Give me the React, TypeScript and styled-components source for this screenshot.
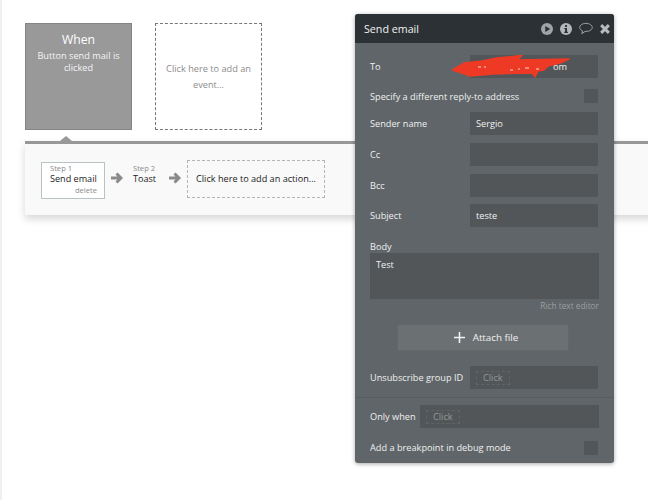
import React from "react";
import styled, { createGlobalStyle } from "styled-components";

const Global = createGlobalStyle`
  html, body { margin: 0; padding: 0; background: #fff; }
  body { font-family: "Open Sans", "Liberation Sans", sans-serif; }
  * { box-sizing: border-box; }
`;

const Page = styled.div`
  position: relative;
  width: 648px;
  height: 500px;
  overflow: hidden;
  background: #fff;
  border-left: 2px solid #f0f0f0;
  padding: 23px 0 0 23px;
`;

const Events = styled.div`
  display: flex;
  gap: 23px;
`;

const WhenCard = styled.div`
  width: 107px;
  height: 107px;
  background: #999;
  border: 1px solid #848484;
  color: #fff;
  text-align: center;
  padding: 6px 8px 0;
`;

const WhenTitle = styled.div`
  font-size: 12.2px;
  line-height: 20px;
`;

const WhenText = styled.div`
  font-size: 9.2px;
  line-height: 12px;
  color: #f4f4f4;
`;

const AddEvent = styled.div`
  width: 107px;
  height: 107px;
  border: 1px dashed #777;
  color: #8d8d8d;
  font-size: 9.2px;
  line-height: 15.5px;
  text-align: center;
  padding: 37px 6px 0;
`;

const Bar = styled.div`
  position: relative;
  margin-top: 11px;
  width: 640px;
  height: 74px;
  background: #f9f9f9;
  border-top: 3px solid #989898;
  box-shadow: 0 4px 8px rgba(0, 0, 0, 0.16);
  display: flex;
  align-items: flex-start;
  padding: 16px 0 0 16px;
  &::before {
    content: "";
    position: absolute;
    left: 35px;
    top: -8px;
    border-left: 6px solid transparent;
    border-right: 6px solid transparent;
    border-bottom: 5px solid #989898;
  }
`;

const Step = styled.div<{ $active?: boolean }>`
  width: ${(p) => (p.$active ? "64px" : "38px")};
  height: 37px;
  margin-top: 2px;
  border: 1px solid ${(p) => (p.$active ? "#b9c3c6" : "transparent")};
  background: ${(p) => (p.$active ? "#fff" : "transparent")};
  padding: 0 7px 0 8px;
  display: flex;
  flex-direction: column;
`;

const StepLabel = styled.span`
  font-size: 7.6px;
  line-height: 10px;
  color: #8a8a8a;
  white-space: nowrap;
`;

const StepName = styled.span`
  font-size: 9.1px;
  line-height: 12px;
  color: #222;
  white-space: nowrap;
`;

const StepDelete = styled.span`
  font-size: 7.6px;
  line-height: 11px;
  text-align: right;
  color: #8a8a8a;
`;

const ArrowSlot = styled.div<{ $wide?: boolean }>`
  width: ${(p) => (p.$wide ? "25px" : "19px")};
  height: 38px;
  display: flex;
  align-items: center;
  justify-content: center;
  padding-left: ${(p) => (p.$wide ? "0" : "4px")};
  padding-bottom: 3px;
`;

const AddAction = styled.div`
  width: 138px;
  height: 38px;
  border: 1px dashed #aeb6b6;
  font-size: 9.15px;
  line-height: 35px;
  text-align: center;
  color: #222;
  white-space: nowrap;
`;

const Panel = styled.div`
  position: absolute;
  left: 353px;
  top: 14px;
  width: 259px;
  height: 449px;
  background: #5f6568;
  border-radius: 3px;
  box-shadow: 0 1px 4px rgba(0, 0, 0, 0.35);
  color: #f0f0f0;
  font-size: 9.2px;
`;

const Header = styled.div`
  height: 29px;
  background: #2c3135;
  border-radius: 3px 3px 0 0;
  display: flex;
  align-items: center;
  padding: 0 4px 0 9px;
  font-size: 10.7px;
  color: #f1f1f1;
`;

const HeaderTitle = styled.span`
  flex: 1;
`;

const HeaderIcons = styled.div`
  display: flex;
  align-items: center;
  gap: 7px;
`;

const Body = styled.div`
  padding: 12px 16px 0 15px;
  display: flex;
  flex-direction: column;
`;

const Row = styled.div<{ $top?: number }>`
  display: flex;
  align-items: center;
  justify-content: space-between;
  height: 23px;
  margin-top: ${(p) => p.$top ?? 0}px;
  white-space: nowrap;
`;

const Field = styled.div<{ $wide?: boolean }>`
  width: ${(p) => (p.$wide ? 179 : 128)}px;
  margin-right: ${(p) => (p.$wide ? -1 : 0)}px;
  flex-shrink: 0;
  height: 23px;
  background: #525659;
  color: #f1f1f1;
  line-height: 23px;
  padding-left: 6px;
  font-size: 9.2px;
  display: flex;
  align-items: center;
`;

const MaskedAddress = styled.span`
  margin-left: 77px;
`;

const Check = styled.div`
  width: 14px;
  height: 14px;
  background: #525659;
`;

const BodyLabel = styled.div`
  margin-top: 13px;
  line-height: 13px;
`;

const TextArea = styled.div`
  width: 229px;
  height: 46px;
  background: #525659;
  padding: 5px 6px;
  line-height: 14px;
`;

const RichLink = styled.div`
  width: 229px;
  text-align: right;
  font-size: 8.3px;
  line-height: 14px;
  color: #9ba0a2;
`;

const AttachButton = styled.div`
  width: 172px;
  height: 27px;
  margin: 11px 0 0 27px;
  padding-left: 6px;
  background: #6b7073;
  border: 1px solid #62676a;
  display: flex;
  align-items: center;
  justify-content: center;
  gap: 8px;
  color: #f1f1f1;
  font-size: 9.8px;
`;

const ClickChip = styled.span`
  border: 1px dashed #5f6467;
  color: #93989a;
  font-size: 9.2px;
  line-height: 12px;
  padding: 0 6px;
  height: 14px;
`;

const Divider = styled.div`
  height: 1px;
  background: #575c5f;
  margin: 8px -16px 7px -15px;
`;

const Scribble = styled.svg`
  position: absolute;
  left: 97px;
  top: 41px;
`;

const Arrow = () => (
  <svg width="12" height="12" viewBox="0 0 12 12" fill="none" stroke="#8a8a8a" strokeWidth="3">
    <path d="M0 6H10M5.500 1.500 10 6 5.500 10.500" />
  </svg>
);

export default function App() {
  return (
    <Page>
      <Global />
      <Events>
        <WhenCard>
          <WhenTitle>When</WhenTitle>
          <WhenText>Button send mail is clicked</WhenText>
        </WhenCard>
        <AddEvent>Click here to add an event...</AddEvent>
      </Events>
      <Bar>
        <Step $active>
          <StepLabel>Step 1</StepLabel>
          <StepName>Send email</StepName>
          <StepDelete>delete</StepDelete>
        </Step>
        <ArrowSlot>
          <Arrow />
        </ArrowSlot>
        <Step>
          <StepLabel>Step 2</StepLabel>
          <StepName>Toast</StepName>
        </Step>
        <ArrowSlot $wide>
          <Arrow />
        </ArrowSlot>
        <AddAction>Click here to add an action...</AddAction>
      </Bar>
      <Panel>
        <Header>
          <HeaderTitle>Send email</HeaderTitle>
          <HeaderIcons>
            <svg width="12" height="12" viewBox="0 0 13 13">
              <circle cx="6.5" cy="6.5" r="6.5" fill="#a0a4a6" />
              <path d="M4.6 3.2 10 6.5 4.6 9.8Z" fill="#2c3135" />
            </svg>
            <svg width="12" height="12" viewBox="0 0 13 13">
              <circle cx="6.5" cy="6.5" r="6.5" fill="#b4b7b9" />
              <rect x="5.4" y="2.2" width="2.2" height="2" fill="#2c3135" />
              <path d="M4.6 5.4H7.6V9.6H8.6V10.8H4.6V9.6H5.5V6.6H4.6Z" fill="#2c3135" />
            </svg>
            <svg width="14" height="13" viewBox="0 0 15 13" fill="none" stroke="#b4b7b9" strokeWidth="0.9">
              <path d="M7.5 1C3.7 1 .8 2.900.8 5.400c0 1.600 1.200 3 3 3.700L3 12l3.600-2.400h.9c3.800 0 6.700-1.800 6.700-4.200S11.300 1 7.500 1Z" />
            </svg>
            <svg width="10" height="10" viewBox="0 0 13 13" stroke="#b9bcbe" strokeWidth="3.800">
              <path d="M1.500 1.500 11.500 11.500M11.500 1.500 1.500 11.500" />
            </svg>
          </HeaderIcons>
        </Header>
        <Body>
          <Row>
            <span>To</span>
            <Field>
              <MaskedAddress>om</MaskedAddress>
            </Field>
          </Row>
          <Row $top={6} style={{ height: 24 }}>
            <span>Specify a different reply-to address</span>
            <Check />
          </Row>
          <Row $top={4}>
            <span>Sender name</span>
            <Field>Sergio</Field>
          </Row>
          <Row $top={8}>
            <span>Cc</span>
            <Field />
          </Row>
          <Row $top={7.5}>
            <span>Bcc</span>
            <Field />
          </Row>
          <Row $top={7.5}>
            <span>Subject</span>
            <Field>teste</Field>
          </Row>
          <BodyLabel>Body</BodyLabel>
          <TextArea>Test</TextArea>
          <RichLink>Rich text editor</RichLink>
          <AttachButton>
            <svg width="11" height="11" viewBox="0 0 11 11" stroke="#f1f1f1" strokeWidth="1.600">
              <path d="M5.500 0V11M0 5.500H11" />
            </svg>
            <span>Attach file</span>
          </AttachButton>
          <Row $top={15}>
            <span>Unsubscribe group ID</span>
            <Field>
              <ClickChip>Click</ClickChip>
            </Field>
          </Row>
          <Divider />
          <Row>
            <span>Only when</span>
            <Field $wide>
              <ClickChip>Click</ClickChip>
            </Field>
          </Row>
          <Row $top={8}>
            <span>Add a breakpoint in debug mode</span>
            <Check />
          </Row>
        </Body>
        <Scribble width="120" height="24" viewBox="0 0 120 24">
          <path
            d="M0 15 L12 8 L30 6 L45 3 L70 0.500 L65 5 L117 4 L108 8 L96 11 L92 15 L86 16 L83 22 L80 18 L41 19 L18 21 L7 17 Z"
            fill="#ee3a24"
            stroke="#ee3a24"
            strokeWidth="1.400"
            strokeLinejoin="round"
          />
          <path d="M26 12h3M32 12h2M58 15h3M66 14h2M73 13h4M84 14h3" stroke="#f6d9d2" strokeWidth="1.200" />
        </Scribble>
      </Panel>
    </Page>
  );
}
